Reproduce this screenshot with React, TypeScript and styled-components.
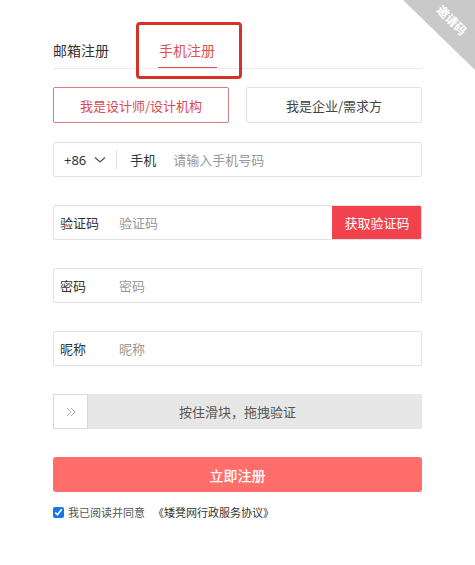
import React from "react";
import styled, { createGlobalStyle } from "styled-components";

const Global = createGlobalStyle`
  html, body { margin: 0; padding: 0; background: #fff; }
  body { font-family: "Noto Sans CJK SC", "Noto Sans", sans-serif; color: #333; }
  * { box-sizing: border-box; }
`;

const Page = styled.div`
  position: relative;
  width: 475px;
  height: 565px;
  overflow: hidden;
  padding: 35px 53px 0 53px;
`;

const Ribbon = styled.div`
  position: absolute;
  top: 0;
  right: 0;
  width: 72px;
  height: 70px;
  background: #c9c9c9;
  clip-path: polygon(0 0, 100% 0, 100% 100%);
`;

const RibbonText = styled.span`
  position: absolute;
  top: 13px;
  right: -2px;
  width: 50px;
  text-align: center;
  transform: rotate(45deg);
  color: #fff;
  font-size: 12px;
  font-weight: 700;
  line-height: 14px;
`;

const Highlight = styled.div`
  position: absolute;
  left: 136px;
  top: 22px;
  width: 106px;
  height: 57px;
  border: 3px solid #d8302a;
  border-radius: 4px;
  pointer-events: none;
`;

const Tabs = styled.div`
  display: flex;
  height: 34px;
  border-bottom: 1px solid #ececec;
  gap: 50px;
`;

const Tab = styled.div<{ $active?: boolean }>`
  position: relative;
  font-size: 14px;
  line-height: 34px;
  height: 34px;
  margin-top: -2px;
  color: ${(p) => (p.$active ? "#e5504f" : "#333")};
  ${(p) =>
    p.$active
      ? `&::after { content: ""; position: absolute; left: -1px; right: -2px; bottom: -1px; height: 1px; background: #e5504f; }`
      : ""}
`;

const Roles = styled.div`
  display: flex;
  justify-content: space-between;
  margin-top: 18px;
`;

const RoleButton = styled.div<{ $active?: boolean }>`
  width: 176px;
  height: 36px;
  display: flex;
  align-items: center;
  justify-content: center;
  font-size: 13px;
  border-radius: 2px;
  border: 1px solid ${(p) => (p.$active ? "#dd7a80" : "#e2e2e2")};
  color: ${(p) => (p.$active ? "#d84a55" : "#444")};
`;

const Field = styled.div<{ $gap: number }>`
  display: flex;
  align-items: center;
  height: 35px;
  margin-top: ${(p) => p.$gap}px;
  border: 1px solid #e2e2e2;
  border-radius: 2px;
  font-size: 13px;
  overflow: hidden;
`;

const Label = styled.span<{ $width?: number }>`
  width: ${(p) => p.$width ?? 65}px;
  padding-left: 6px;
  color: #333;
  flex: none;
`;

const Placeholder = styled.span`
  color: #999;
  flex: 1;
`;

const Prefix = styled.div`
  display: flex;
  align-items: center;
  padding-left: 10px;
  gap: 8px;
  height: 100%;
  color: #333;
  font-family: "Noto Sans", "Noto Sans CJK SC", sans-serif;
`;

const Divider = styled.span`
  width: 1px;
  height: 19px;
  background: #e0e0e0;
  margin: 0 13px 0 10px;
`;

const CodeButton = styled.div`
  width: 90px;
  height: 35px;
  margin: -1px -1px -1px 0;
  background: #f2424d;
  color: #fff;
  display: flex;
  align-items: center;
  justify-content: center;
  font-size: 13px;
`;

const Slider = styled.div`
  position: relative;
  height: 35px;
  margin-top: 28px;
  background: #e7e7e7;
  display: flex;
  align-items: center;
  justify-content: center;
  font-size: 13px;
  color: #555;
`;

const Handle = styled.div`
  position: absolute;
  left: 0;
  top: 0;
  width: 35px;
  height: 35px;
  background: #fff;
  border: 1px solid #d8d8d8;
  display: flex;
  align-items: center;
  justify-content: center;
`;

const Submit = styled.div`
  height: 35px;
  margin-top: 28px;
  background: #ff6e6b;
  border-radius: 3px;
  color: #fff;
  display: flex;
  align-items: center;
  justify-content: center;
  font-size: 14px;
  font-weight: 500;
`;

const Agree = styled.label`
  display: flex;
  align-items: center;
  gap: 4px;
  margin-top: 12px;
  font-size: 11px;
  color: #555;
`;

const Check = styled.input`
  width: 11px;
  height: 11px;
  margin: 0;
  accent-color: #1a73e8;
`;

const Link = styled.span`
  color: #333;
  margin-left: 4px;
`;

export default function App() {
  return (
    <>
      <Global />
      <Page>
        <Tabs>
          <Tab>邮箱注册</Tab>
          <Tab $active>手机注册</Tab>
        </Tabs>
        <Roles>
          <RoleButton $active>我是设计师/设计机构</RoleButton>
          <RoleButton>我是企业/需求方</RoleButton>
        </Roles>
        <Field $gap={19}>
          <Prefix>
            +86
            <svg width="12" height="8" viewBox="0 0 12 8">
              <path d="M1 1.5 L6 6 L11 1.5" fill="none" stroke="#555" strokeWidth="1.3" />
            </svg>
          </Prefix>
          <Divider />
          <Label $width={43} style={{ paddingLeft: 0 }}>手机</Label>
          <Placeholder>请输入手机号码</Placeholder>
        </Field>
        <Field $gap={28}>
          <Label>验证码</Label>
          <Placeholder>验证码</Placeholder>
          <CodeButton>获取验证码</CodeButton>
        </Field>
        <Field $gap={28}>
          <Label>密码</Label>
          <Placeholder>密码</Placeholder>
        </Field>
        <Field $gap={28}>
          <Label>昵称</Label>
          <Placeholder>昵称</Placeholder>
        </Field>
        <Slider>
          <Handle>
            <svg width="12" height="12" viewBox="0 0 12 12">
              <path d="M2 2 L6 6 L2 10 M6 2 L10 6 L6 10" fill="none" stroke="#aaa" strokeWidth="1" />
            </svg>
          </Handle>
          按住滑块，拖拽验证
        </Slider>
        <Submit>立即注册</Submit>
        <Agree>
          <Check type="checkbox" defaultChecked />
          我已阅读并同意
          <Link>《矮凳网行政服务协议》</Link>
        </Agree>
        <Highlight />
        <Ribbon>
          <RibbonText>邀请码</RibbonText>
        </Ribbon>
      </Page>
    </>
  );
}
